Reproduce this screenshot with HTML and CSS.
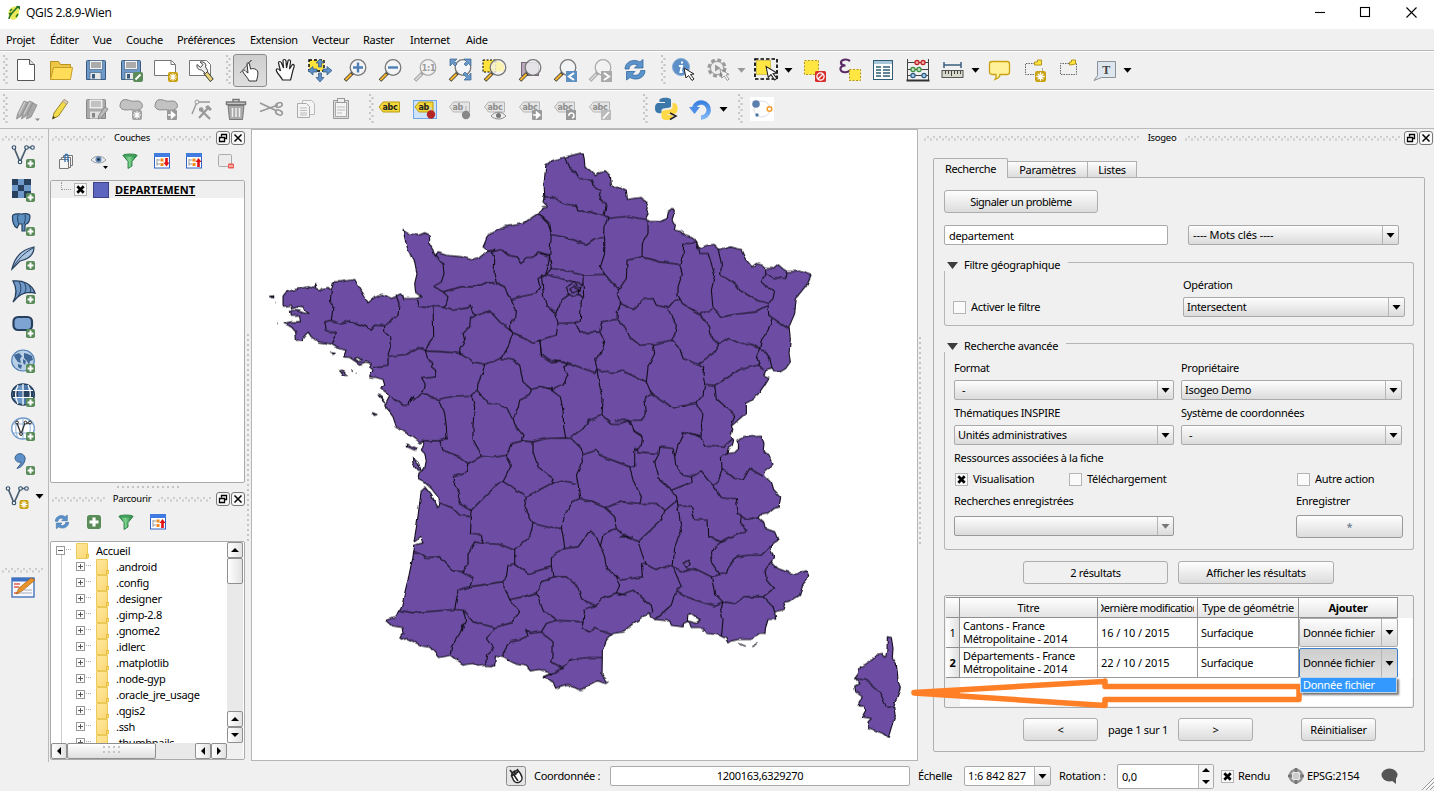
FILE: index.html
```html
<!DOCTYPE html>
<html lang="fr">
<head>
<meta charset="utf-8">
<title>QGIS 2.8.9-Wien</title>
<link rel="stylesheet" href="styles.css">
</head>
<body>
<svg class="defs" width="0" height="0">
  <defs>
    <linearGradient id="gFold" x1="0" y1="0" x2="1" y2="1"><stop offset="0" stop-color="#ffe69b"/><stop offset="1" stop-color="#fbd874"/></linearGradient>
    <linearGradient id="gBlue" x1="0" y1="0" x2="0" y2="1"><stop offset="0" stop-color="#3b83e0"/><stop offset="1" stop-color="#7fb4f5"/></linearGradient>
    <linearGradient id="gGreen" x1="0" y1="0" x2="1" y2="0"><stop offset="0" stop-color="#2f8f4c"/><stop offset=".45" stop-color="#7fd58f"/><stop offset="1" stop-color="#1d7a3a"/></linearGradient>
    <symbol id="plus" viewBox="0 0 9 9"><rect width="9" height="9" rx="1.800" fill="#5a8c5a"/><path d="M4.500 1.600v5.800M1.600 4.500h5.800" stroke="#fff" stroke-width="2"/></symbol>
    <symbol id="star" viewBox="0 0 10 10"><rect width="10" height="10" rx="2" fill="#c9a211"/><path d="M5 1.200v7.600M1.200 5h7.600M2.400 2.400l5.200 5.200M7.600 2.400l-5.200 5.200" stroke="#fff" stroke-width="1.200"/></symbol>
    <symbol id="gstar" viewBox="0 0 10 10"><rect width="10" height="10" rx="2" fill="#a3a3a3"/><path d="M5 1.200v7.600M1.200 5h7.600M2.400 2.400l5.200 5.200M7.600 2.400l-5.200 5.200" stroke="#fff" stroke-width="1.200"/></symbol>
    <symbol id="garrow" viewBox="0 0 10 10"><rect width="10" height="10" rx="1" fill="#999"/><path d="M1 5h5M4.500 2L8 5 4.500 8z" fill="#fff" stroke="#fff" stroke-width="1.400"/></symbol>
    <symbol id="lens" viewBox="0 0 24 24"><path d="M10 14.500L2 22.500" stroke="#333" stroke-width="3.600"/><path d="M8.500 16L2.500 22" stroke="#f2b630" stroke-width="2.200"/><circle cx="15" cy="9.500" r="7.800" fill="#f4f6f8" fill-opacity=".75" stroke="#777" stroke-width="1.300"/></symbol>
    <symbol id="glens" viewBox="0 0 24 24"><path d="M10 14.500L2 22.500" stroke="#999" stroke-width="3.600"/><path d="M8.500 16L2.500 22" stroke="#d8d8d8" stroke-width="2"/><circle cx="15" cy="9.500" r="7.800" fill="#f2f2f2" stroke="#aaa" stroke-width="1.300"/></symbol>
    <symbol id="cursor" viewBox="0 0 12 14"><path d="M1 1l2 10 2.500-2.500 3.500 5 2-1.500-3.500-4.500 3.500-.5z" fill="#fff" stroke="#222" stroke-width="1"/></symbol>
    <symbol id="floppy" viewBox="0 0 24 24"><path d="M2.500 3.500a1 1 0 0 1 1-1h17a1 1 0 0 1 1 1v18h-19z" fill="#6f99c9" stroke="#3a5a7d"/><rect x="5.500" y="2.500" width="13" height="9" fill="#f3f3f3" stroke="#3a5a7d" stroke-width=".6"/><path d="M7 5h10M7 7h10M7 9h10" stroke="#555" stroke-width=".9"/><rect x="6" y="14.500" width="11" height="7" fill="#e8e8e8" stroke="#3a5a7d" stroke-width=".6"/><rect x="8" y="16" width="3" height="4.500" fill="#3a5a7d"/></symbol>
    <symbol id="gfloppy" viewBox="0 0 24 24"><path d="M2.500 3.500a1 1 0 0 1 1-1h17a1 1 0 0 1 1 1v18h-19z" fill="#aaa" stroke="#888"/><rect x="5.500" y="2.500" width="13" height="9" fill="#ececec"/><path d="M7 5h10M7 7h10M7 9h10" stroke="#999"/><rect x="6" y="14.500" width="11" height="7" fill="#e0e0e0"/><rect x="8" y="16" width="3" height="4.500" fill="#888"/></symbol>
    <symbol id="gtag" viewBox="0 0 24 24"><path d="M1.500 8l4-5h16v10h-16z" fill="#e5e5e5" stroke="#b5b5b5"/></symbol>
    <symbol id="sync" viewBox="0 0 24 24"><path d="M2 11C2 4 10 0 17 4l3-2.500V10h-8.500l3-3C10 5 6.500 7 6 11z" fill="#5b93cc" stroke="#33689f" stroke-width=".8"/><path d="M22 12.500c0 7-8 11-15 7L3.500 22v-8.500H12l-3 3c4.500 2 8 0 8.700-4z" fill="#5b93cc" stroke="#33689f" stroke-width=".8"/></symbol>
    <symbol id="folder" viewBox="0 0 13 16"><path d="M.5.500h11v10.500h1v4H11v.5H.500z" fill="url(#gFold)" stroke="#ecca58"/><path d="M10.500 15.500v-4h2" fill="none" stroke="#e3b93a"/></symbol>
    <symbol id="treebox" viewBox="0 0 16 16"><rect x=".5" y=".5" width="15" height="14.500" fill="#fff" stroke="#2f63c4"/><rect x="0" y="0" width="16" height="4" fill="#3f7be0"/><path d="M3 6v7M3 7h3M3 11h3" stroke="#999" fill="none"/><rect x="6.500" y="5.500" width="3" height="3" fill="#f08a1a"/><rect x="6.500" y="10" width="3" height="3" fill="#f08a1a"/></symbol>
    <symbol id="funnel" viewBox="0 0 16 16"><path d="M1 2.500c0-2 14-2 14 0L10 8.500V13l-4 2.500v-7z" fill="url(#gGreen)" stroke="#1a7034" stroke-width=".8"/><ellipse cx="8" cy="2.400" rx="6.300" ry="1.300" fill="#3f9c5a"/></symbol>
    <symbol id="vnode" viewBox="0 0 24 24"><path d="M3 3.500l6 14.500 6.500-14.500h6" fill="none" stroke="#4a5f72" stroke-width="1.700"/><g fill="#e8eff6" stroke="#2f4a66" stroke-width="1.100"><circle cx="3" cy="3.500" r="1.800"/><circle cx="9" cy="18" r="1.800"/><circle cx="15.500" cy="3.500" r="1.800"/><circle cx="21.500" cy="3.500" r="1.800"/></g></symbol>
    <symbol id="cross" viewBox="0 0 9 9"><path d="M1.300 1.300l6.400 6.400M7.700 1.300L1.300 7.700" stroke="#000" stroke-width="2.700"/></symbol>
    <symbol id="down" viewBox="0 0 9 5"><path d="M.5 0h8L4.500 4.800z" fill="currentColor"/></symbol>
    <filter id="rough" x="0" y="0" width="100%" height="100%"><feTurbulence type="fractalNoise" baseFrequency=".14" numOctaves="1" seed="4" result="n"/><feDisplacementMap in="SourceGraphic" in2="n" scale="4" xChannelSelector="R" yChannelSelector="G"/></filter>
  </defs>
</svg>

<div class="window">
  <header class="titlebar">
    <svg class="logo" width="14" height="16" viewBox="0 0 14 16"><path d="M4 3c4-3 9-1 8 5s-5 8-8 6S0 6 4 3z" fill="#e8ea5a"/><path d="M2 14C2 9 8 6 11 1M3 6l2-2M2 9l2-1M9 12l2-3" stroke="#267326" stroke-width="1.500" fill="none"/><path d="M9 1h4v4z" fill="#267326"/></svg>
    <span class="title">QGIS 2.8.9-Wien</span>
    <svg class="winbtns" width="110" height="14" viewBox="0 0 110 14" fill="none" stroke="#000" stroke-width="1.100"><path d="M3 6.500h10"/><rect x="48.500" y="1.500" width="9" height="9"/><path d="M94.500 1.500l10 10M104.500 1.500l-10 10"/></svg>
  </header>

  <nav class="menubar"><span class="m1">Projet</span><span class="m2">Éditer</span><span class="m3">Vue</span><span class="m4">Couche</span><span class="m5">Préférences</span><span class="m6">Extension</span><span class="m7">Vecteur</span><span class="m8">Raster</span><span class="m9">Internet</span><span class="m10">Aide</span></nav>

  <div class="toolbar">
    <i class="grip-v"></i>
    <svg class="ic"><path d="M3.500 1.500h12l5 5v16h-17z" fill="#fff" stroke="#555"/><path d="M15.500 1.500v5h5" fill="#ddd" stroke="#555"/></svg>
    <svg class="ic"><path d="M1.500 21.500v-18h8l2 3h10v4" fill="#edc646" stroke="#b98f1e"/><path d="M1.500 21.500l3-12h19l-2 12z" fill="#ffdd59" stroke="#c69d29"/></svg>
    <svg class="ic"><use href="#floppy"/></svg>
    <svg class="ic"><use href="#floppy"/><rect x="14" y="14" width="10" height="10" rx="2" fill="#5a8c5a"/><path d="M16.500 21.500l5-5" stroke="#fff" stroke-width="2"/></svg>
    <svg class="ic"><path d="M.500 2.500h17l4 4v11H.500z" fill="#fff" stroke="#777"/><path d="M17 2.500v4h4" fill="none" stroke="#777"/><use href="#star" x="14" y="14" width="10" height="10"/></svg>
    <svg class="ic"><path d="M.500 2.500h17l4 4v11H.500z" fill="#fff" stroke="#777"/><path d="M16 14l7 8.500" stroke="#333" stroke-width="4.500"/><path d="M16.500 14.500l6 7.500" stroke="#e9d27c" stroke-width="3"/><path d="M8 6.500l3.500 3 2.500-3-3-2.500c4-1 7 2 5.500 5l2.500 4-2.500 2.500-4-3.500c-3 0-5-2-4.500-5.500z" fill="#eee" stroke="#444"/></svg>
    <i class="grip-v g1"></i>
    <span class="pressed"><svg class="ic"><path d="M9 23c-1-3-5-7-6-9s1-3 3-.5l2 1.500-1-9c0-2 2-2 2.500 0l1 5c3-1 6 0 7 2s0 6-1 10z" fill="#fff" stroke="#333" transform="translate(2 0)"/><path d="M2 15l8-9 3-4M9 7l5-5" stroke="#666" fill="none"/></svg></span>
    <svg class="ic hand"><path d="M8 22c-1-3-5-6-6-9s2-3 4 0L4 5c0-2 2-2 3 0l2 5-.5-7c0-2 2.500-2 3 0l.5 7 1.500-7c.5-2 3-1 2.500 1L15 11l2.500-4c1-1.500 3 0 2 2-2 5-2 9-3.500 13z" fill="#fff" stroke="#222" stroke-width="1.200" transform="translate(1.500 0)"/></svg>
    <svg class="ic"><rect x="1" y="2" width="15" height="11" fill="#ffe23c" stroke="#000" stroke-width="1.400" stroke-dasharray="3 2"/><path d="M12 1l4 4h-2.500v4h-3V5H8zM12 24l4-4.500h-2.500V15h-3v4.500H8zM0 12.500l5-4V11h4v3H5v3zM24 12.500l-5-4V11h-4v3h4v3z" fill="#5d8fc8" stroke="#2f5680" stroke-width=".7"/></svg>
    <svg class="ic"><use href="#lens"/><path d="M15 4.500v10M10 9.500h10" stroke="#4d7fb5" stroke-width="2.400"/></svg>
    <svg class="ic"><use href="#lens"/><path d="M10 9.500h10" stroke="#4d7fb5" stroke-width="2.400"/></svg>
    <svg class="ic"><use href="#glens"/><text x="8.800" y="12.500" class="ratio">1:1</text></svg>
    <svg class="ic"><use href="#lens"/><path d="M2 1h7L6.500 3.500 9 6 7 8 4.500 5.500 2 8zM23 1h-7l2.500 2.500L16 6l2 2 2.500-2.500L23 8zM23 22h-7l2.500-2.500L15 16l2-2 3.500 3.500L23 15z" fill="#6a97c9" stroke="#3a648f" stroke-width=".7"/></svg>
    <svg class="ic"><rect x="0" y="2" width="13" height="12" fill="#ffe23c" stroke="#000" stroke-dasharray="2 1.500"/><use href="#lens"/><path d="M13 3.500a6.500 6.500 0 0 1 7 10h-7z" fill="#fff2a0" opacity=".8"/></svg>
    <svg class="ic"><rect x="3.500" y="4.500" width="17" height="13" fill="#b7a9b9" stroke="#75647a"/><use href="#lens"/></svg>
    <svg class="ic"><use href="#lens"/><rect x="13" y="13" width="11" height="11" fill="#5e8fc1"/><path d="M21 15l-5 3.500 5 3.500" stroke="#fff" stroke-width="2" fill="none"/></svg>
    <svg class="ic"><use href="#glens"/><rect x="13" y="13" width="11" height="11" fill="#aaa"/><path d="M16 15l5 3.500-5 3.500" stroke="#fff" stroke-width="2" fill="none"/></svg>
    <svg class="ic"><use href="#sync"/></svg>
    <i class="grip-v g2"></i>
    <svg class="ic"><circle cx="10" cy="9" r="8.500" fill="#5d8fc8" stroke="#83a9d1"/><path d="M8 8h3l-1.500 6h2M11 3.500v2" stroke="#fff" stroke-width="2" fill="none"/><use href="#cursor" x="12" y="9" width="12" height="14"/></svg>
    <svg class="ic"><circle cx="11" cy="10" r="8" fill="#ddd" stroke="#999" stroke-width="3" stroke-dasharray="3.800 2.500"/><circle cx="11" cy="10" r="6.500" fill="#eee" stroke="#999"/><path d="M9 6.500l5.500 3.500L9 13.500z" fill="#999"/><use href="#cursor" x="13" y="10" width="11" height="13" opacity=".45"/></svg>
    <svg class="dn grey a1"><use href="#down"/></svg>
    <svg class="ic"><rect x="1" y="1" width="22" height="20" fill="none" stroke="#000" stroke-width="1.700" stroke-dasharray="3.500 2"/><rect x="2.500" y="2.500" width="14" height="14" fill="#ffe640" stroke="#b9a21b" stroke-width=".6"/><use href="#cursor" x="11" y="7" width="13" height="16"/></svg>
    <svg class="dn a2"><use href="#down"/></svg>
    <svg class="ic"><rect x="1.500" y="2.500" width="14" height="14" fill="#ffe640" stroke="#b5951a" stroke-dasharray="2 1.500"/><rect x="12" y="13" width="11" height="11" rx="1.500" fill="#d82d2d"/><circle cx="17.500" cy="18.500" r="3.600" fill="none" stroke="#fff" stroke-width="1.300"/><path d="M15 21l5-5" stroke="#fff" stroke-width="1.300"/></svg>
    <svg class="ic eps"><path d="M12 3C8 0 2.500 2 3 5c.3 2 3 2.500 4.500 2.500C4 7.500 2 9 2.500 11.500c1 3.500 7 3.500 9.500 1" fill="none" stroke="#5b2a66" stroke-width="2.200"/><rect x="11.500" y="11.500" width="11" height="11" fill="#ffe640" stroke="#b5951a" stroke-dasharray="2 1.500"/></svg>
    <svg class="ic"><rect x="2.500" y="2.500" width="19" height="19" fill="#fff" stroke="#2f5c75"/><rect x="3" y="3" width="18" height="3" fill="#a9c5d8"/><path d="M5 9h5M5 12h5M5 15h5M5 18h5M12 9h7M12 12h7M12 15h7M12 18h7" stroke="#2f5c75" stroke-width="1.300"/></svg>
    <svg class="ic"><path d="M1.500 1v21M22.500 1v21M1 4.500h22M1 11.500h22M1 17.500h22" stroke="#444" fill="none"/><path d="M.500 22.500h23" stroke="#333" stroke-width="2"/><g stroke-width="1.200"><g fill="#f2a0a0" stroke="#b22"><circle cx="11" cy="4.500" r="2.100"/><circle cx="17" cy="4.500" r="2.100"/></g><g fill="#bfe4bf" stroke="#3c8a3c"><circle cx="7" cy="11.500" r="2.100"/><circle cx="13" cy="11.500" r="2.100"/></g><g fill="#a9cbe6" stroke="#2c5d86"><circle cx="7" cy="17.500" r="2.100"/><circle cx="18" cy="17.500" r="2.100"/></g></g></svg>
    <svg class="ic"><path d="M3 4v6M20 4v6M3 7h17" stroke="#3a5f80" stroke-width="1.500"/><rect x="1" y="12.500" width="21" height="7" fill="#d6d9cb" stroke="#555"/><path d="M4.500 13v3M7.500 13v3M10.500 13v5M13.500 13v3M16.500 13v3M19.500 13v3" stroke="#444"/></svg>
    <svg class="dn a3"><use href="#down"/></svg>
    <svg class="ic"><path d="M4 3.500h15q2.500 0 2.500 2.500v8q0 2.500-2.500 2.500h-7c0 2-2 4-5 5 1-1.500 1.500-3 1-5H4q-2.500 0-2.500-2.500V6Q1.500 3.500 4 3.500z" fill="#fff09a" stroke="#c9a211" stroke-width="1.300"/></svg>
    <svg class="ic"><path d="M12 5.500H2.500v11h17v-6" fill="none" stroke="#666" stroke-dasharray="1.500 1"/><path d="M11.500 7v-3h3V2h4v5z" fill="#ffe640" stroke="#b5951a"/><use href="#star" x="12" y="13" width="11" height="11"/></svg>
    <svg class="ic"><path d="M11 5.500H2.500v11h16v-11" fill="none" stroke="#666" stroke-dasharray="1.500 1"/><path d="M11.500 7v-3h2V2h4v4z" fill="#ffe640" stroke="#b5951a"/></svg>
    <svg class="ic"><path d="M4.500 3.500h18v16h-14l-7.500 3 3.500-5z" fill="#dde6ee" stroke="#8b9197"/><text x="9.300" y="15.500" class="tee">T</text></svg>
    <svg class="dn a4"><use href="#down"/></svg>
  </div>

  <div class="toolbar">
    <i class="grip-v"></i>
    <svg class="ic"><path d="M2.500 22l1-5L10 4l4 1.500L7 19zM7.500 22l1-5L15 4l4 1.500L12 19zM12.500 22l1-5L19 6l4 2-6 12z" fill="#a9a9a9" stroke="#8a8a8a" stroke-width=".8"/><path d="M5 17l6-12M10 17l6-12" stroke="#cfcfcf" stroke-width="1.200"/><path d="M21 21.500h5l-2.500 2.500z" fill="#888"/></svg>
    <svg class="ic"><path d="M3.500 22l1.500-6L15 2.500l4 2.500-9.500 14z" fill="#f2dc4a" stroke="#8d7a1d" stroke-width=".9"/><path d="M3.500 22l.7-3 2 1.500z" fill="#333"/><path d="M15 2.500l-1.500 2 4 2.500L19 5z" fill="#e9cfae" stroke="#999" stroke-width=".7"/></svg>
    <svg class="ic"><use href="#gfloppy"/><path d="M14 22l1-4 6-8 3 2-6 8z" fill="#bbb" stroke="#888"/></svg>
    <svg class="ic"><path d="M2 5c2-4 7-2 10-1s9-2 11 3-4 7-9 6-8 1-11-1-2-4-1-7z" fill="#c2c2c2" stroke="#888"/><use href="#gstar" x="13" y="13" width="10" height="10"/></svg>
    <svg class="ic"><path d="M2 5c2-4 7-2 10-1s9-2 11 3-4 7-9 6-8 1-11-1-2-4-1-7z" fill="#c2c2c2" stroke="#888"/><use href="#garrow" x="13" y="13" width="10" height="10"/></svg>
    <svg class="ic"><path d="M3 17l5-12h13" fill="none" stroke="#999" stroke-width="1.400"/><circle cx="8" cy="5" r="2" fill="#eee" stroke="#999"/><path d="M10 21l9-10M12 13l9 9" stroke="#999" stroke-width="2.200" fill="none"/><path d="M16 10l3-2 4 4-2 2zM10 11l3-1 2 3-2 2-3-1z" fill="#999"/></svg>
    <svg class="ic"><path d="M4 8.500h16l-1.500 14h-13z" fill="#aaa" stroke="#777"/><path d="M2.500 7.500V5h19v2.500zM9 5V2.500h6V5" fill="#ddd" stroke="#777" stroke-width="1.500"/><path d="M8.500 11v9M12 11v9M15.500 11v9" stroke="#eee" stroke-width="1.500"/></svg>
    <svg class="ic"><path d="M1 6l17 8M1 14.500l18-6.500" stroke="#999" stroke-width="1.800"/><ellipse cx="20" cy="15.500" rx="3.500" ry="2.300" fill="none" stroke="#999" stroke-width="1.600" transform="rotate(25 20 15.500)"/><ellipse cx="20" cy="8" rx="3.300" ry="2.200" fill="none" stroke="#999" stroke-width="1.600" transform="rotate(-20 20 8)"/></svg>
    <svg class="ic"><path d="M8.500 3.500h9l3 3v11h-12z" fill="#f4f4f4" stroke="#bbb"/><path d="M3.500 6.500h9l3 3v11h-12z" fill="#f4f4f4" stroke="#aaa"/><path d="M6 11h7M6 13.500h7M6 16h7M6 18h7" stroke="#bbb"/></svg>
    <svg class="ic"><path d="M4.500 3.500h15v18h-15z" fill="#ddd" stroke="#999"/><rect x="6.500" y="5.500" width="11" height="14" fill="#f4f4f4" stroke="#aaa"/><rect x="8.500" y="1.500" width="7" height="4" fill="#eee" stroke="#999"/><path d="M8 10h8M8 13h8M8 16h5" stroke="#bbb"/></svg>
    <i class="grip-v g3"></i>
    <svg class="ic"><path d="M1 8l4-5h16.500v10H5z" fill="#f3d839" stroke="#b99c12"/><text x="4.500" y="11" class="abc">abc</text></svg>
    <svg class="ic"><rect x=".5" y="1.500" width="23" height="18" fill="#cfe3fa" stroke="#6ea8e8"/><path d="M2 8l4-5h14v10H6z" fill="#f3d839" stroke="#b99c12"/><text x="5.500" y="11" class="abc">ab</text><path d="M17.500 8v8" stroke="#ccc" stroke-width="2"/><circle cx="18" cy="15.500" r="4.200" fill="#b22626"/></svg>
    <svg class="ic"><use href="#gtag"/><text x="4.500" y="11" class="abc g">ab</text><path d="M18 7v8" stroke="#ccc" stroke-width="2"/><circle cx="18" cy="16" r="4.200" fill="#888"/></svg>
    <svg class="ic"><use href="#gtag"/><text x="4.500" y="11" class="abc g">abc</text><path d="M8 17c4-5 11-5 15 0-4 4-11 4-15 0z" fill="#eee" stroke="#888"/><circle cx="15.500" cy="16.500" r="2.500" fill="#777"/></svg>
    <svg class="ic"><use href="#gtag"/><text x="4.500" y="11" class="abc g">abc</text><use href="#garrow" x="14" y="11" width="10" height="10"/></svg>
    <svg class="ic"><use href="#gtag"/><text x="4.500" y="11" class="abc g">abc</text><rect x="13" y="11" width="10" height="10" fill="#999"/><path d="M16 17a2.500 2.500 0 1 1 3 2" stroke="#fff" stroke-width="1.500" fill="none"/></svg>
    <svg class="ic"><use href="#gtag"/><text x="4.500" y="11" class="abc g">abc</text><rect x="13" y="11" width="10" height="10" fill="#bbb"/><path d="M15 19.500l6-6.500" stroke="#fff" stroke-width="1.800"/></svg>
    <i class="grip-v g4"></i>
    <svg class="ic"><path d="M5.500 2.500C7 0 16 0 17 2.500V9c0 3-8 1-9.500 4v3C2 17 1 14 1 11s1-5 4-5h6V5H5.500z" fill="#3b77a8"/><path d="M18.500 6c5-.5 5.500 4 5 7s-2 4-4 4h-6v1h5c.5 4-2 5-6 5s-5-2-5-4v-4c1-3 9-1 11-4z" fill="#ffd845"/><path d="M16 16l6 3-6 3.500" stroke="#222" stroke-width="1.500" fill="none"/></svg>
    <svg class="ic"><path d="M5 11a7.500 7.500 0 1 1 7 9.500" fill="none" stroke="url(#gBlue)" stroke-width="4.500"/><path d="M0 10h11l-5.500 7z" fill="#4c8fe8"/></svg>
    <svg class="dn a5"><use href="#down"/></svg>
    <i class="grip-v g5"></i>
    <svg class="ic"><rect width="24" height="24" fill="#fff"/><circle cx="12" cy="12" r="8" fill="none" stroke="#d8dfe8"/><circle cx="6" cy="7" r="3.800" fill="#5d7fae"/><circle cx="7" cy="18" r="1.700" fill="#4f74a8"/><circle cx="19.500" cy="12" r="2.300" fill="#fff" stroke="#f09a2a" stroke-width="1.500"/></svg>
  </div>

  <div class="main">
    <aside class="sidebar">
      <i class="grip-h"></i>
      <svg class="ic"><use href="#vnode"/><use href="#plus" x="15" y="15" width="9" height="9"/></svg>
      <svg class="ic"><path d="M1 1h19v19H1z" fill="#6f99c9"/><path d="M1 1h6v6H1zM13 1h7v6h-7zM7 7h6v6H7zM1 13h6v7H1zM13 13h7v7h-7z" fill="#27405e"/><use href="#plus" x="15" y="15" width="9" height="9"/></svg>
      <svg class="ic"><path d="M1.500 4C2 1 8 2 10 2s8-2 9 2c0 5-2 8-4 8l-1 1v6h-3v-7H8l-2 4C3 15 1 9 1.500 4z" fill="#5d8fc0" stroke="#27405e" stroke-width="1.200"/><path d="M7 3c-1 4 0 7 1 9M14 3c1 3 0 6-1 9" stroke="#27405e" fill="none"/><use href="#plus" x="15" y="15" width="9" height="9"/></svg>
      <svg class="ic"><path d="M1 23C3 14 8 4 23 1c0 7-5 12-14 14z" fill="#a9c4e0" stroke="#27405e" stroke-width="1.200"/><path d="M1 23C7 13 13 7 22 2" stroke="#27405e" fill="none"/><use href="#plus" x="15" y="15" width="9" height="9"/></svg>
      <svg class="ic"><path d="M2 1c10-1 19 3 22 12-8-2-16 1-22 9C6 15 6 8 2 1z" fill="#6f99c9" stroke="#27405e" stroke-width="1.300"/><path d="M8 1.500c3 5 2 11-1 15M13 3c3 4 2 8 0 11M18 5.500c2 3 2 5 1 8" stroke="#27405e" fill="none"/><use href="#plus" x="15" y="15" width="9" height="9"/></svg>
      <svg class="ic"><rect x="2.500" y="3" width="18.500" height="13" rx="4.500" fill="#7da4d2" stroke="#27405e" stroke-width="2.200"/><use href="#plus" x="15" y="15" width="9" height="9"/></svg>
      <svg class="ic"><ellipse cx="12" cy="11.500" rx="11.300" ry="10.500" fill="#b9cfe6" stroke="#4f7fb1" stroke-width="1.200"/><path d="M3 6l5-2 3 3-2 3 1 4-3-1-3-4zM13 4l4 1 4 2 1 4-3 1-1 4-2-4-3-3zM7 15l4 1-1 4-3-2zM12 10l3 2-1 4-2-2z" fill="#3f6898"/><use href="#plus" x="15" y="15" width="9" height="9"/></svg>
      <svg class="ic"><ellipse cx="12" cy="11.500" rx="11.300" ry="10.500" fill="#6f99c9" stroke="#27405e" stroke-width="1.600"/><path d="M2 8h20v6H2z" fill="#27405e"/><path d="M7 8h4v6H7zM13 2h4v5h-4zM13 15h4v5h-4z" fill="#4a76aa"/><path d="M12 1v21M2 7.500h20M2 14.500h20M7 2c-3 6-3 13 0 19M17 2c3 6 3 13 0 19" stroke="#fff" fill="none" stroke-width="1.200"/><use href="#plus" x="15" y="15" width="9" height="9"/></svg>
      <svg class="ic"><ellipse cx="12" cy="11.500" rx="11.300" ry="10.500" fill="#fff" stroke="#6f99c9" stroke-width="1.300"/><path d="M12 1v21M2 7h20M2 16h20M7 2c-3 6-3 13 0 19M17 2c3 6 3 13 0 19" stroke="#8fb1d8" fill="none"/><path d="M6 6l4 11 4-11h5" fill="none" stroke="#333" stroke-width="1.300"/><g fill="#fff" stroke="#222"><circle cx="6" cy="5.500" r="1.400"/><circle cx="10" cy="17" r="1.400"/><circle cx="14.500" cy="5.500" r="1.400"/><circle cx="19" cy="5.500" r="1.400"/></g><use href="#plus" x="15" y="15" width="9" height="9"/></svg>
      <svg class="ic"><path d="M4 7a5 5 0 1 1 10 2.500C13 14 10 17 6 18c3-4 4.500-5 4-6.500C6.500 12.500 4 10 4 7z" fill="#5d8fc8" stroke="#3a5f8a" transform="translate(0 -.5)"/><use href="#plus" x="15" y="15" width="9" height="9"/></svg>
      <div class="pair"><svg class="ic"><use href="#vnode"/><use href="#star" x="14" y="15" width="10" height="9"/></svg><svg class="dn"><use href="#down"/></svg></div>
      <i class="grip-h low"></i>
      <svg class="ic"><rect x="1" y="2" width="22" height="19" fill="#f6f8fb" stroke="#3a6bb5" stroke-width="1.300"/><rect x="1" y="2" width="22" height="3.500" fill="#3f72c4"/><path d="M3 8h6M3 11h5M3 17h5" stroke="#e25b4c" stroke-width="1.400"/><path d="M13 14h8M8 17h13" stroke="#aab"/><path d="M5 18l3-6L20 2l4 2-13 11z" fill="#e8922b" stroke="#a86414" stroke-width=".7"/></svg>
    </aside>

    <section class="docks">
      <div class="dock-title"><i class="grip-h"></i><span>Couches</span><i class="grip-h"></i><b class="sq"><svg viewBox="0 0 10 10"><path d="M3.500 3.500v-2h5v4h-2M1.500 4.500h5v4h-5z" fill="none" stroke="#000" stroke-width="1.300"/></svg></b><b class="sq"><svg viewBox="0 0 10 10"><path d="M1.500 1.500l7 7M8.500 1.500l-7 7" stroke="#000" stroke-width="1.500"/></svg></b></div>
      <div class="dock-tools">
        <svg class="i16"><path d="M5.500 5V2.500h9v10H12M3.500 7V4.500h9v10H10M1.500 6.500h9v9h-9z" fill="#f4f4f4" stroke="#777"/><path d="M7 9V3c0-2.500 3-2.500 3 0v6" stroke="#2f6fb0" stroke-width="1.300" fill="none"/></svg>
        <svg class="i16 eye"><path d="M0 7c4-5 11-5 15 0-4 4-11 4-15 0z" fill="#e8edf1" stroke="#999"/><circle cx="7.500" cy="6.500" r="3" fill="#5b86b5"/><circle cx="7.500" cy="6.500" r="1.200" fill="#222"/><path d="M12 13h5l-2.500 3z"/></svg>
        <svg class="i16"><use href="#funnel"/></svg>
        <svg class="i16"><use href="#treebox"/><path d="M12.500 5v6" stroke="#e01010" stroke-width="2.600"/><path d="M9.500 9.500h6l-3 4z" fill="#e01010"/></svg>
        <svg class="i16"><use href="#treebox"/><path d="M12.500 8v6" stroke="#e01010" stroke-width="2.600"/><path d="M9.500 9h6l-3-4z" fill="#e01010"/></svg>
        <svg class="i16"><rect x=".5" y="1.500" width="13" height="12" rx="1" fill="#ececec" stroke="#aaa"/><rect x="10" y="10.500" width="6" height="5" rx="1" fill="#ee5a52"/><path d="M11 13h4" stroke="#fff"/></svg>
      </div>
      <div class="frame layers"><div class="layer"><i class="elbow"></i><b class="cb on"><svg><use href="#cross"/></svg></b><i class="swatch"></i><strong>DEPARTEMENT</strong></div></div>
      <div class="split"><i class="grip-dots"></i></div>
      <div class="dock-title t2"><i class="grip-h"></i><span>Parcourir</span><i class="grip-h"></i><b class="sq"><svg viewBox="0 0 10 10"><path d="M3.500 3.500v-2h5v4h-2M1.500 4.500h5v4h-5z" fill="none" stroke="#000" stroke-width="1.300"/></svg></b><b class="sq"><svg viewBox="0 0 10 10"><path d="M1.500 1.500l7 7M8.500 1.500l-7 7" stroke="#000" stroke-width="1.500"/></svg></b></div>
      <div class="dock-tools b">
        <svg class="i16" viewBox="0 0 16 16"><use href="#sync" width="16" height="16"/></svg>
        <svg class="i16"><use href="#plus" x="1" y="1" width="14" height="14"/></svg>
        <svg class="i16"><use href="#funnel"/></svg>
        <svg class="i16"><use href="#treebox"/><path d="M12.500 8v6" stroke="#e01010" stroke-width="2.600"/><path d="M9.500 9h6l-3-4z" fill="#e01010"/></svg>
      </div>
      <div class="frame browser">
        <ul class="tree">
          <li class="root"><i class="pm minus"></i><svg class="fo"><use href="#folder"/></svg>Accueil</li>
          <li><i class="pm"></i><svg class="fo"><use href="#folder"/></svg>.android</li>
          <li><i class="pm"></i><svg class="fo"><use href="#folder"/></svg>.config</li>
          <li><i class="pm"></i><svg class="fo"><use href="#folder"/></svg>.designer</li>
          <li><i class="pm"></i><svg class="fo"><use href="#folder"/></svg>.gimp-2.8</li>
          <li><i class="pm"></i><svg class="fo"><use href="#folder"/></svg>.gnome2</li>
          <li><i class="pm"></i><svg class="fo"><use href="#folder"/></svg>.idlerc</li>
          <li><i class="pm"></i><svg class="fo"><use href="#folder"/></svg>.matplotlib</li>
          <li><i class="pm"></i><svg class="fo"><use href="#folder"/></svg>.node-gyp</li>
          <li><i class="pm"></i><svg class="fo"><use href="#folder"/></svg>.oracle_jre_usage</li>
          <li><i class="pm"></i><svg class="fo"><use href="#folder"/></svg>.qgis2</li>
          <li><i class="pm"></i><svg class="fo"><use href="#folder"/></svg>.ssh</li>
          <li><i class="pm"></i><svg class="fo"><use href="#folder"/></svg>.thumbnails</li>
        </ul>
        <div class="vscroll"><b class="sb"><i class="up"></i></b><b class="thumb"></b><span></span><b class="sb"><i class="up"></i></b><b class="sb"><i class="dw"></i></b></div>
        <div class="hscroll"><b class="sb"><i class="lf"></i></b><b class="thumb"><i class="grip-dots"></i></b><span></span><b class="sb"><i class="lf"></i></b><b class="sb"><i class="rt"></i></b></div>
        <div class="corner"></div>
      </div>
    </section>

    <div class="vsplit"><i class="grip-dots"></i></div>

    <div class="map">
      <svg class="france" viewBox="253 130.500 665 630">
        <g filter="url(#rough)" stroke="#15101f" stroke-width="3.400" fill="none" stroke-linejoin="round">
          <path fill="#6c4ea3" transform="translate(260.7 140.700) scale(.33333)" d="M970 37L973 55 976 78 990 90 1008 107 1020 95 1037 92 1052 107 1055 135 1062 143 1080 140 1100 150 1103 178 1125 174 1143 172 1165 187 1157 207 1166 222 1158 238 1170 243 1198 245 1222 236 1226 215 1240 205 1244 212 1237 238 1247 255 1244 270 1265 274 1280 288 1297 293 1310 303 1320 325 1340 316 1360 313 1375 326 1390 328 1412 320 1445 328 1455 350 1465 366 1477 380 1490 370 1508 375 1518 384 1542 386 1556 374 1570 386 1582 394 1620 393 1654 405 1640 435 1610 472 1605 520 1588 560 1592 595 1588 640 1592 665 1578 685 1562 695 1545 695 1537 683 1520 688 1512 705 1528 712 1512 738 1495 762 1475 780 1457 790 1457 820 1435 840 1415 858 1420 870 1412 885 1422 900 1418 915 1405 925 1402 940 1425 937 1437 925 1435 900 1445 895 1465 890 1505 888 1513 910 1510 935 1527 943 1540 972 1515 995 1515 1005 1535 1025 1542 1048 1563 1070 1558 1100 1540 1105 1525 1118 1500 1122 1495 1130 1512 1145 1517 1165 1545 1175 1555 1200 1540 1210 1532 1232 1542 1250 1535 1265 1555 1285 1580 1295 1605 1302 1640 1292 1647 1310 1628 1335 1620 1365 1590 1385 1575 1390 1570 1408 1545 1415 1548 1437 1525 1438 1517 1465 1516 1480 1505 1478 1490 1488 1472 1498 1440 1498 1415 1502 1405 1508 1398 1495 1385 1488 1370 1483 1342 1480 1330 1462 1295 1462 1288 1445 1272 1452 1270 1460 1235 1455 1230 1442 1185 1438 1172 1430 1170 1418 1155 1425 1120 1450 1090 1475 1060 1480 1040 1500 1028 1530 1027 1605 1045 1625 1038 1630 1012 1622 990 1633 970 1647 955 1647 925 1632 905 1637 888 1644 880 1625 850 1612 875 1600 840 1588 812 1592 800 1578 770 1572 730 1552 707 1548 705 1577 678 1575 655 1578 640 1570 610 1575 572 1545 540 1552 515 1522 490 1518 442 1495 425 1500 420 1495 433 1480 430 1462 400 1458 380 1440 405 1432 425 1400 448 1305 462 1238 465 1215 490 1208 482 1190 465 1205 463 1202 472 1150 485 1050 495 1040 515 1065 535 1102 540 1095 538 1075 515 1045 490 1022 475 1015 478 998 495 985 500 960 495 940 485 930 495 902 480 908 450 885 410 860 400 830 375 795 390 765 365 745 375 735 370 718 350 712 330 710 340 690 330 680 335 670 318 665 300 672 270 652 255 650 262 630 235 625 215 612 195 608 175 605 155 590 145 575 130 592 128 600 110 600 108 575 95 560 70 550 95 545 122 545 120 525 95 525 92 510 112 512 148 523 130 503 115 500 100 505 95 495 70 498 70 468 80 455 120 445 145 440 165 445 168 430 172 448 182 452 190 445 205 442 215 450 222 425 245 425 270 420 285 418 295 435 310 460 325 488 345 472 370 462 395 475 410 468 428 460 432 475 470 475 488 470 468 455 465 430 472 400 465 365 445 330 438 305 430 268 450 280 475 286 495 278 512 285 513 300 507 308 520 330 525 345 535 338 560 345 605 350 640 360 660 352 680 335 705 330 685 332 670 320 685 285 735 260 790 250 835 220 848 200 863 198 850 185 855 165 853 130 858 75 875 62 900 55 920 50Z"/>
          <path transform="translate(260.7 140.700) scale(.33333)" d="M215 450L212 480 220 500 215 540 195 545 200 570 230 580 218 612M215 540L240 550 270 542 320 560 330 572 345 555 375 557 380 550 400 535 415 525 418 490 410 468M375 557L375 575 390 590 392 620 385 645 385 675 340 680M388 648L440 643 475 622 497 632M470 475L475 500 495 505 515 495 550 502 560 490 565 470 550 455 520 440 545 425 553 400 550 372 525 345M520 500L522 590 510 605 497 632M550 502L580 510 625 503 632 495 640 520 650 525 632 535 630 560 610 580 615 600 600 625 605 640 550 635 497 632M550 455L600 440 640 440 680 428 705 428M697 335L705 360 703 400 710 428 735 440 745 465 755 478M697 335L725 328 745 345 770 350 783 370 800 352 820 352 835 335 870 345M835 220L865 250 875 280 870 345 865 380 858 403M755 478L790 468 830 460 840 440 835 415 858 403M755 478L770 510 768 535 750 545 750 565 760 578M650 525L690 512 720 545 760 578 745 620 725 655 675 672 640 665 600 640M497 632L505 660 520 670 515 680 528 690 528 710 485 715 497 735 488 758 465 780 460 768 455 785 452 768 448 795 430 795 395 770M488 758L510 770 535 778 580 768 635 765 652 750 655 730 668 700 675 672M535 778L555 820 560 860 562 897M635 765L645 800 640 850 640 897M652 750L685 790 720 790 740 805 760 835 775 805 780 780 810 765 815 748M725 655L760 660 780 675 790 725 815 748 850 740 880 745M760 835L765 855 790 885 785 897M760 578L790 590 820 610 845 600 840 600 845 640 845 650 875 668 900 665 925 668"/>
          <path transform="translate(540.7 140.700) scale(.33333)" d="M78 50L90 85 108 95 120 118 155 120 160 135 185 152 180 180 200 190 193 228M10 170L40 170 75 192 110 195 115 212 150 215 193 228 205 235 265 228 318 238M-5 220L30 250 35 283 80 293 140 312 165 295 195 292M205 235L193 255 192 280 195 292 195 340 182 380 195 402M30 350L35 385 75 390 130 405 195 402 215 425 238 447M35 385L20 403M0 340L30 347M5 405L20 403 60 415 100 425 130 430 130 405M130 430L132 470 125 480 122 540 108 547M80 440L105 427 120 445 115 462 100 468 85 460ZM90 447L105 438 118 452 98 455ZM118 445L130 428M115 462L130 475M5 405L12 470 20 495 48 520 65 480 90 462M48 520L55 550 108 547 120 578 180 575M55 550L50 585 0 600 5 640 30 660 85 668 72 680 85 705 70 735 35 750 38 742 0 740M85 668L130 685 165 697 172 687M180 575L195 605 185 640 165 655 172 687M180 575L185 545 232 537 233 515 243 490 232 460 238 447 260 415 262 360 307 350 308 310 325 280 325 243M307 350L360 365 420 373 430 345 432 312 450 313 470 303 478 340 505 340 515 370 525 405 515 450 520 505 480 522M420 373L428 400 415 440 415 465 428 490 480 522M243 490L280 508 310 478 340 475 350 495 385 503 405 480 425 478M535 326L545 370 543 405 585 430 600 450 642 475 685 490 700 475 705 450 680 440 665 425 678 398 700 412 738 415 742 394M678 384V398M520 505L545 530 590 522 650 515 685 495 687 525 748 567M697 535L685 570 665 600 660 628 680 635 690 655 697 683M232 537L255 560 270 590 300 615 340 612 395 600 405 585 410 555 395 530 385 503M480 522L510 560 515 595 540 610 520 640 485 665 475 672 430 655 420 625 395 600M540 610L570 595 600 610 630 610 660 628 650 650 658 675 672 690M658 675L600 688 560 715 525 735 495 732 490 705 492 680 475 672M340 612L345 640 325 680 320 725 335 760M172 687L220 700 245 690 290 712 320 728M172 687L180 740 190 780 187 825 215 850 245 850 270 840 305 840 320 820 315 770 335 760 400 803 468 790 490 765 495 732M525 735L530 775 585 825 575 858M468 790L490 820 485 860 488 885 480 890M425 878L455 880 480 890M187 825L150 840 130 865 95 890M265 840L280 870 305 885 308 897M35 750L62 770 70 810 72 860 78 892"/>
          <path transform="translate(360.7 420.700) scale(.33333)" d="M195 62L240 62 265 55M240 62L250 90 300 110 325 130M340 57L360 95 365 108 325 130 318 160 280 170 285 195 300 220 298 250 335 270M365 108L400 112 440 105 455 135 430 185M240 247L280 265 300 285 335 290M335 270L332 290M335 270L365 240 415 190 430 185 465 205 500 230 575 190M440 105L455 70 490 62 485 57M490 62L520 65 560 55 620 53 635 55 665 85 668 125 650 165 655 190M520 65L520 95 535 140 580 175 575 190 605 180 650 190M500 230L495 260 520 310 580 325 605 320M655 190L660 235 640 245 620 275 605 320M660 235L695 245 735 262 765 290 770 325M735 262L790 245 840 250M770 325L745 335 730 345 722 378M605 320L612 360 615 385 655 380 690 332 710 350 722 378 735 410 740 445 765 465 780 475M770 325L790 345 820 350M335 290L332 340 365 342 370 370 420 372 465 390M520 310L510 350 465 390M370 370L345 365 325 400 325 430 310 455M162 398L185 400 200 412 240 410 280 452 310 455 340 475 330 500M465 390L465 430 445 435 440 470 425 485M465 430L505 460 575 440M615 385L575 410 575 440 580 470M425 485L435 505 450 538M330 500L425 485M330 500L295 510 285 568M118 570L160 578 285 568 310 570 340 605 405 622M310 570L318 600 300 640 275 680 272 705M305 615L312 612 308 632ZM405 622L455 608 480 575 450 538 490 530 530 518M580 470L545 485 530 518 550 570 590 600M405 622L380 655 400 685 380 705 378 735M580 470L620 470 655 500 665 535 685 550 710 555M590 600L670 605M590 600L560 610 545 635 512 640 498 628 505 648 480 660 450 665 430 700 430 712M545 635L580 665 580 710 575 725 610 745 630 718 690 712 727 712M550 770L610 745M670 605L665 625 690 635 705 625 755 643M670 605L675 568 710 555 735 530 770 518M765 465L780 495 770 518 800 525M665 105L710 90 720 105 810 140"/>
          <path transform="translate(620.7 420.700) scale(.33333)" d="M30 140L45 135 45 85 55 95 115 100M68 57L65 75 48 88M-15 0L30 0 45 35 68 50M30 140L40 180 65 230 60 250M60 250L110 250 135 272M155 210L120 180 105 125 118 100 120 80 160 85 165 110M240 45L190 38 175 75 165 110 168 135 190 165 215 170 218 185 155 210 170 225 172 240M215 170L245 155 265 180 282 197 305 232 320 235 350 235 355 280 385 297 415 290M240 45L255 75 315 78 340 55M325 100L305 110 307 150 295 185 282 197M307 145L345 175 370 180 390 145 430 168M172 240L135 272 125 300 55 365 25 350 0 350M55 365L70 410 80 435M172 240L185 330 165 380 160 440M175 258L215 258 225 298 265 300 267 350 305 365M365 285L362 310 382 330 305 365 285 380 270 420 300 462M460 370L425 405 385 405 350 410 325 445 320 460 290 465M160 440L130 438 110 448 80 435 65 430 68 470 0 480M160 440L185 500 165 520 155 555 105 598M160 440L190 455 225 445 275 470 290 465M190 430L205 420 212 432 200 445ZM275 470L285 520 310 545M175 515L225 540 290 558 310 545 345 550 375 530 430 530M305 648L310 600 303 570 310 545M455 425L435 445 440 480 462 505 430 530 460 560 465 575M0 525L40 510 95 555 100 578"/>
          <path fill="#6c4ea3" transform="translate(620.7 420.700) scale(.33333)" d="M803 650L815 652 820 685 818 712 830 730 835 780 842 805 828 840 822 862 827 885 820 905 808 945 805 952 790 940 745 922 745 905 755 895 728 890 738 870 735 858 715 857 728 830 708 815 705 798 718 790 705 775 715 762 722 740 750 722 770 705 785 703 798 712 802 685Z"/>
          <path transform="translate(620.7 420.700) scale(.33333)" d="M705 775L740 780 780 815 800 860 822 862M358 670L378 678M398 677L414 668M484 576h3M248 628l5 4"/>
          <path fill="#fff" transform="translate(620.7 420.700) scale(.33333)" d="M208 578L224 590 242 598 228 610 206 602Z"/>
          <path fill="#6c4ea3" transform="translate(260.7 140.700) scale(.33333)" d="M29 469l10-2v6zM46 484h2M52 550h3M213 638l11 2-5 3zM240 692l8-2 15 16-14-2zM275 688l5 3M285 700h3M355 765l8 2 12 18-12-11zM338 818l14 5-8 3zM440 912l34 13-2 6-32-11zM458 952l18 16 8 22-8 0-16-20z"/>
          <path fill="#fff" transform="translate(260.7 140.700) scale(.33333)" d="M285 656l15-6 8 8-10 4z"/>
        </g>
      </svg>
    </div>

    <section class="isogeo">
      <i class="edge grip-dots"></i>
      <div class="dock-title wide"><i class="grip-h"></i><span>Isogeo</span><i class="grip-h"></i><b class="sq"><svg viewBox="0 0 10 10"><path d="M3.500 3.500v-2h5v4h-2M1.500 4.500h5v4h-5z" fill="none" stroke="#000" stroke-width="1.300"/></svg></b><b class="sq"><svg viewBox="0 0 10 10"><path d="M1.500 1.500l7 7M8.500 1.500l-7 7" stroke="#000" stroke-width="1.500"/></svg></b></div>
      <div class="tabs"><span class="tab act">Recherche</span><span class="tab w2">Paramètres</span><span class="tab w3">Listes</span></div>
      <div class="pane">
        <button class="btn signal">Signaler un problème</button>
        <div class="row search"><div class="input">departement</div><div class="combo keys"><span>---- Mots clés ----</span><b><svg class="dn"><use href="#down"/></svg></b></div></div>

        <div class="ghead"><svg width="11" height="7"><path d="M0 0h11L5.500 7z" fill="#3c3c3c"/></svg><span>Filtre géographique</span><i></i></div>
        <div class="gbody geo">
          <label class="check"><b class="cb"></b>Activer le filtre</label>
          <div class="op"><span>Opération</span><div class="combo"><span>Intersectent</span><b><svg class="dn"><use href="#down"/></svg></b></div></div>
        </div>

        <div class="ghead second"><svg width="11" height="7"><path d="M0 0h11L5.500 7z" fill="#3c3c3c"/></svg><span>Recherche avancée</span><i></i></div>
        <div class="gbody adv">
          <div class="two lab"><span>Format</span><span>Propriétaire</span></div>
          <div class="two"><div class="combo"><span class="ind">-</span><b><svg class="dn"><use href="#down"/></svg></b></div><div class="combo"><span>Isogeo Demo</span><b><svg class="dn"><use href="#down"/></svg></b></div></div>
          <div class="two lab"><span>Thématiques INSPIRE</span><span>Système de coordonnées</span></div>
          <div class="two"><div class="combo"><span>Unités administratives</span><b><svg class="dn"><use href="#down"/></svg></b></div><div class="combo"><span class="ind">-</span><b><svg class="dn"><use href="#down"/></svg></b></div></div>
          <div class="lab">Ressources associées à la fiche</div>
          <div class="checks"><label class="check"><b class="cb on"><svg><use href="#cross"/></svg></b>Visualisation</label><label class="check"><b class="cb"></b>Téléchargement</label><label class="check"><b class="cb"></b>Autre action</label></div>
          <div class="saved lab2"><span>Recherches enregistrées</span><span>Enregistrer</span></div>
          <div class="saved"><div class="combo dim"><span></span><b><svg class="dn"><use href="#down"/></svg></b></div><button class="btn dim">*</button></div>
        </div>

        <div class="row actions"><button class="btn flat">2 résultats</button><button class="btn">Afficher les résultats</button></div>

        <div class="tableframe">
          <div class="thead"><b></b><b>Titre</b><b class="clip"><span>Dernière modification</span></b><b>Type de géométrie</b><b class="bold">Ajouter</b></div>
          <div class="trow"><b>1</b><span>Cantons - France<br>Métropolitaine - 2014</span><span class="d">16 / 10 / 2015</span><span>Surfacique</span><div class="combo cell"><span>Donnée fichier</span><b><svg class="dn"><use href="#down"/></svg></b></div></div>
          <div class="trow"><b class="bold">2</b><span>Départements - France<br>Métropolitaine - 2014</span><span class="d">22 / 10 / 2015</span><span>Surfacique</span><div class="combo cell open"><span>Donnée fichier</span><b><svg class="dn"><use href="#down"/></svg></b><div class="popup">Donnée fichier</div></div></div>
          <div class="trest"><b></b></div>
        </div>

        <div class="row pager"><button class="btn">&lt;</button><span>page 1 sur 1</span><button class="btn">&gt;</button><button class="btn reset">Réinitialiser</button></div>
      </div>
    </section>
  </div>

  <footer class="status">
    <svg class="mouse" width="20" height="20" viewBox="0 0 20 20"><rect x=".5" y=".5" width="19" height="19" rx="2" fill="#e6e6e6" stroke="#8b8b8b"/><rect x="6" y="5" width="9" height="12" rx="4.500" fill="#fff" stroke="#222" stroke-width="1.500" transform="rotate(-25 10 10)"/><path d="M5 10l7-4M8 5l2 4M4 4l3 4M11 3l2 3M8 9l4 6" stroke="#222" stroke-width="1.500"/></svg>
    <span class="c0">Coordonnée :</span><div class="input coord">1200163,6329270</div>
    <span class="c1">Échelle</span><div class="combo scale"><span>1:6 842 827</span><b><svg class="dn"><use href="#down"/></svg></b></div>
    <span class="c2">Rotation :</span><div class="spin"><span>0,0</span><b><i class="up"></i><i class="dw"></i></b></div>
    <label class="check rendu"><b class="cb on"><svg><use href="#cross"/></svg></b>Rendu</label>
    <svg class="globe" width="16" height="16" viewBox="0 0 16 16"><circle cx="8" cy="8" r="6.500" fill="#b5b5b5" stroke="#8a8a8a" stroke-width="1.500"/><circle cx="8" cy="8" r="4" fill="#ccc" stroke="#eee"/><path d="M8 0v4M8 12v4M0 8h4M12 8h4" stroke="#777" stroke-width="3"/></svg>
    <span>EPSG:2154</span>
    <svg class="bubble" width="17" height="16" viewBox="0 0 17 16"><ellipse cx="8.500" cy="7" rx="8" ry="6.500" fill="#555"/><path d="M10 12l5 4v-6z" fill="#555"/></svg>
    <svg class="sizer" width="12" height="12"><path d="M0 12L12 0M4 12l8-8M8 12l4-4" stroke="#999"/><path d="M1.500 12L12 1.500M5.500 12L12 5.500" stroke="#fff"/></svg>
  </footer>
  <svg class="callout" width="400" height="34" viewBox="906 676 400 34"><path d="M914 692.500L1104 681.500M1105 681V686.500H1299V699.500H1105V705.500L914 693" fill="none" stroke="#ff7f27" stroke-width="5.500" stroke-linejoin="round" stroke-linecap="round"/><path d="M912 692.500L960 688V697.500z" fill="#ff7f27"/></svg>
</div>
</body>
</html>
```
FILE: styles.css
```css
* { box-sizing: border-box; }
body { margin: 0; background: #f0f0f0; color: #000; font: 11px/14px "Noto Sans", "Open Sans", sans-serif; letter-spacing: -.3px; overflow: hidden; }
i { font-style: normal; display: block; flex: none; }
b { font-weight: normal; flex: none; }
svg { display: block; flex: none; }
.defs { position: absolute; }
.bold { font-weight: bold; }
.window { position: relative; width: 1434px; height: 791px; display: flex; flex-direction: column; white-space: nowrap; }

.titlebar { height: 29px; background: #fff; display: flex; align-items: center; padding: 0 12px 4px 7px; font-size: 12px; font-family: "Open Sans", sans-serif; }
.title { margin-left: 5px; flex: 1; }
.menubar { height: 21px; display: flex; align-items: center; padding-left: 6px; }
.m1 { width: 44px; } .m2 { width: 43px; } .m3 { width: 33px; } .m4 { width: 51px; } .m5 { width: 73px; }
.m6 { width: 62px; } .m7 { width: 51px; } .m8 { width: 47px; } .m9 { width: 56px; }

.toolbar { height: 39px; border-top: 1px solid #b9b9b9; box-shadow: inset 0 1px #fff; display: flex; align-items: center; }
.ic { width: 24px; height: 24px; margin-right: 11px; overflow: visible; }
.grip-v { width: 5px; height: 30px; margin: 0 6px 0 3px; background: radial-gradient(circle at 1px 1px, #c6c6c6 1px, transparent 1.300px) 0 0/5px 6px repeat-y, radial-gradient(circle at 3.500px 4px, #c6c6c6 1px, transparent 1.300px) 0 0/5px 6px repeat-y; }
.g1 { margin: 0 2px 0 2px; }
.pressed { width: 34px; height: 33px; flex: none; border: 1px solid #8c8c8c; border-radius: 3px; background: linear-gradient(#cfcfcf, #dedede); display: flex; align-items: center; padding-left: 4px; margin-right: 6px; }
.g2 { margin: 0 5px 0 3px; }
.dn { width: 9px; height: 5px; }
.grey { color: #999; }
.a1 { margin: 0 8px 0 -4px; }
.a2 { margin: 0 10px 0 -5px; }
.eps { margin-right: 9px; }
.a3 { margin: 0 8px 0 -5px; }
.a4 { margin-left: -5px; }
.g3 { margin: 0 4px 0 5px; }
.g3 ~ .ic { margin-top: 3px; }
.g4 { margin: 0 6px 0 20px; }
.g4 ~ .ic { margin-top: 0; }
.a5 { margin: 0 10px 0 -5px; }
.g5 { margin: 0 7px 0 0; }
.ratio { font: bold 8px "DejaVu Sans", sans-serif; fill: #999; }
.tee { font: bold 12px "Liberation Serif", serif; fill: #444; }
.abc { font: bold 8px "DejaVu Sans", sans-serif; fill: #222; }
.abc.g { fill: #8d8d8d; }

.main { height: 634px; display: flex; border-top: 1px solid #b9b9b9; }
.sidebar { width: 49px; flex: none; border-right: 1px solid #b9b9b9; padding: 7px 0 0 11px; display: flex; flex-direction: column; }
.sidebar .ic { margin: 0 0 10.100px; }
.grip-h { height: 5px; background: radial-gradient(circle at 1px 3.500px, #cdcdcd 1px, transparent 1.300px) 0 0/6px 5px repeat-x, radial-gradient(circle at 4px 1px, #cdcdcd 1px, transparent 1.300px) 0 0/6px 5px repeat-x; }
.sidebar .grip-h { width: 41px; margin: 0 0 3px -9px; }
.sidebar .low { margin-top: 49px; margin-bottom: 3px; }
.pair { display: flex; margin-left: -6px; align-items: center; height: 34px; }
.pair .dn { margin-left: 6px; margin-top: -10px; }
.docks { width: 197px; flex: none; display: flex; flex-direction: column; padding-left: 1px; }
.dock-title { height: 14px; flex: none; display: flex; align-items: center; margin: 2px 1px 0 2px; font-size: 9.500px; }
.dock-title .grip-h { width: 54px; }
.dock-title span { width: 52px; text-align: center; }
.sq { width: 14px; height: 14px; border: 1px solid #777; border-radius: 3px; background: #f7f7f7; display: grid; place-items: center; margin-left: 1px; }
.sq svg { width: 10px; height: 10px; }
.dock-title .grip-h + .sq { margin-left: auto; }
.dock-tools { height: 31px; display: flex; align-items: center; gap: 16px; padding-left: 8px; }
.eye { margin: 0 -1px 0 1px; }
.i16 { width: 16px; height: 16px; overflow: visible; }
.frame { border: 1px solid #aaa; border-radius: 2px; background: #fff; width: 195px; flex: none; }
.layers { height: 303px; margin-top: 4px; }
.layer { background: #efefef; height: 17px; display: flex; align-items: center; padding-left: 10px; }
.elbow { width: 10px; height: 8px; border: dotted #999; border-width: 0 0 1px 1px; margin: -7px 3px 0 0; }
.cb { width: 13px; height: 13px; border: 1px solid #b5b5b5; background: #fafafa; display: grid; place-items: center; }
.cb svg { width: 9px; height: 9px; }
.swatch { width: 16px; height: 16px; background: #5d66bf; border: 1px solid #3b4286; margin: 0 6px 0 6px; }
.layer strong { text-decoration: underline; letter-spacing: .05px; }
.split { height: 8px; flex: none; display: grid; place-items: center; }
.grip-dots { background: radial-gradient(circle at 1px 1px, #c4c4c4 1px, transparent 1.200px) 0 0/5px 5px; }
.split .grip-dots { width: 63px; height: 3px; }
.t2 { margin-top: 1px; }
.dock-tools.b { padding-left: 4px; }
.browser { height: 219px; display: grid; grid-template: 201px 16px / 176px 16px; margin-top: 4px; }
.tree { list-style: none; margin: 0; padding: 1px 0 0; overflow: hidden; background: linear-gradient(90deg, transparent 10px, #ccc 10px, #ccc 11px, transparent 11px) 0 8px no-repeat; }
.tree li { height: 16px; display: flex; align-items: center; padding-left: 25px; background: repeating-linear-gradient(90deg, #aaa 0 1px, transparent 1px 2px) 35px 6px/6px 1px no-repeat; }
.tree li.root { padding-left: 5px; background-position: 15px 6px; }
.fo { width: 13px; height: 16px; margin: 0 7px 0 11px; }
.pm { width: 9px; height: 9px; border: 1px solid #999; background: linear-gradient(#555, #555) 1px 3px/5px 1px no-repeat, linear-gradient(#555, #555) 3px 1px/1px 5px no-repeat, #fff; margin-top: -2px; }
.minus { background: linear-gradient(#555, #555) 1px 3px/5px 1px no-repeat, #fff; }
.vscroll, .hscroll { display: flex; background: #e9e9e9; }
.vscroll { flex-direction: column; }
.vscroll span, .hscroll span { flex: 1; }
.sb, .thumb { border: 1px solid #8f8f8f; border-radius: 2px; background: linear-gradient(90deg, #fff, #e2e2e2); width: 16px; height: 16px; display: grid; place-items: center; }
.vscroll .thumb { height: 26px; }
.hscroll .thumb { width: 89px; background: linear-gradient(#fff, #dedede); }
.hscroll .grip-dots { width: 18px; height: 10px; }
.corner { background: #f0f0f0; }
.up, .dw, .lf, .rt { width: 0; height: 0; border: 4px solid transparent; }
.up { border-width: 0 4px 4px; border-bottom-color: #000; }
.dw { border-width: 4px 4px 0; border-top-color: #000; }
.lf { border-width: 4px 4px 4px 0; border-right-color: #000; }
.rt { border-width: 4px 0 4px 4px; border-left-color: #000; }
.vsplit { width: 5px; flex: none; display: grid; place-items: center; }
.vsplit .grip-dots { width: 3px; height: 208px; margin-top: -15px; }
.map { width: 667px; height: 632px; border: 1px solid #b5b5b5; background: #fff; flex: none; }
.france { width: 665px; height: 630px; }

.isogeo { flex: 1; min-width: 0; position: relative; display: flex; flex-direction: column; padding: 0 9px 0 15px; }
.edge { position: absolute; left: 1px; top: 208px; width: 3px; height: 208px; }
.wide { margin: 2px -8px 0 -9px; }
.wide .grip-h { width: 215px; }
.wide .grip-h + span { width: 46px; }
.tabs { display: flex; align-items: flex-end; height: 33px; margin-bottom: -1px; z-index: 1; }
.tab { border: 1px solid #b0b0b0; border-left: 0; height: 17px; background: linear-gradient(#fdfdfd, #dcdcdc); text-align: center; padding-top: 1px; }
.tab.act { width: 75px; height: 20px; background: #f0f0f0; border-left: 1px solid #b0b0b0; border-bottom: 0; border-radius: 2px 2px 0 0; padding-top: 3px; }
.w2 { width: 80px; } .w3 { width: 49px; }
.pane { height: 575px; border: 1px solid #b0b0b0; border-radius: 2px; padding: 12px 10px 0; display: flex; flex-direction: column; }
.btn { font: inherit; letter-spacing: inherit; color: #000; height: 23px; border: 1px solid #adadad; border-radius: 3px; background: linear-gradient(#fefefe, #dcdcdc); padding: 0; flex: none; }
.signal { width: 154px; letter-spacing: -.5px; }
.row { display: flex; align-items: center; }
.search { margin-top: 12px; gap: 20px; }
.input { height: 20px; border: 1px solid #aaa; border-radius: 2px; background: #fff; padding: 3px 4px; width: 224px; }
.combo { height: 20px; border: 1px solid #aaa; border-radius: 2px; background: linear-gradient(#fdfdfd, #dbdbdb); display: flex; flex: none; position: relative; }
.combo > span { flex: 1; padding: 2px 3px; }
.combo > .ind { padding-left: 7px; }
.combo > b { width: 16px; border-left: 1px solid #b5b5b5; display: grid; place-items: center; }
.keys { width: 211px; letter-spacing: -.1px; }
.keys > span { padding-left: 4px; }
.ghead { display: flex; height: 15px; margin-top: 11px; align-items: center; padding-left: 3px; }
.ghead svg { margin-top: 3px; }
.ghead span { margin: 2px 8px 0 6px; }
.ghead i { flex: 1; height: 9px; align-self: flex-end; border: solid #b5b5b5; border-width: 1px 1px 0 0; border-radius: 0 3px 0 0; }
.gbody { border: solid #b5b5b5; border-width: 0 1px 1px; border-radius: 0 0 3px 3px; }
.geo { height: 55px; display: flex; padding-left: 8px; }
.check { display: flex; align-items: center; gap: 5px; }
.geo .check { width: 230px; height: 14px; margin-top: 29px; }
.op { padding-top: 7px; }
.op .combo { width: 222px; margin-top: 5px; }
.adv { height: 198px; padding: 9px 0 0 9px; }
.lab { height: 14px; }
.two { display: grid; grid-template-columns: 220px 221px; column-gap: 7px; }
.two + .two { margin-top: 5px; }
.two + .lab { margin-top: 6px; }
.checks { display: grid; grid-template-columns: 114px 228px auto; margin-top: 7px; padding-left: 1px; }
.saved { display: grid; grid-template-columns: 220px 107px; justify-content: space-between; padding-right: 10px; }
.lab2 { margin: 8px 0 8px; }
.saved .dim { color: #777; border-color: #999; }
.saved .btn.dim { margin-top: -1px; color: #58708c; }
.actions { margin: 11px 0 11px 79px; gap: 10px; }
.flat { width: 145px; background: #f0f0f0; }
.actions .btn:last-child { width: 156px; letter-spacing: -.25px; }
.tableframe { height: 113px; border: 1px solid #aaa; border-radius: 2px; padding: 1px; }
.thead, .trow { display: grid; grid-template-columns: 14px 138px 100px 101px 99px; }
.thead b { height: 21px; border: solid #8f8f8f; border-width: 1px 1px 1px 0; text-align: center; padding-top: 3px; background: linear-gradient(#fff, #e4e4e4); }
.thead .bold { font-weight: bold; }
.clip { overflow: hidden; display: flex; justify-content: center; letter-spacing: -.5px; }
.clip span { width: 93px; overflow: hidden; display: flex; justify-content: center; }
.trow { height: 30px; width: 467px; background: #fff; }
.trow > b { border: solid #8f8f8f; border-width: 0 1px 1px 0; background: linear-gradient(90deg, #fff, #e0e0e0); text-align: center; padding-top: 8px; }
.trow > b.bold { font-weight: bold; }
.trow > span { border: solid #9a9a9a; border-width: 0 1px 1px 0; padding: 0 0 1px 3px; line-height: 13px; display: flex; align-items: center; }
.trow .d { letter-spacing: -.1px; }
.cell { height: 29px; border-radius: 2px; }
.cell > span { padding: 7px 3px; }
.open { height: 30px; border-color: #3c7fcf; background: linear-gradient(#cdcdcd, #e2e2e2); }
.popup { position: absolute; left: 0; top: 28px; width: 97px; height: 16px; border: 1px solid #c4d4e4; background: #3399ff; color: #fff; padding-left: 2px; box-shadow: 2px 2px 2px rgba(0,0,0,.55); z-index: 5; }
.trest { height: 28px; background: #fff; }
.trest b { display: block; width: 14px; height: 28px; background: #f0f0f0; }
.pager { margin: 10px 0 0 79px; }
.pager .btn { width: 75px; }
.pager span { width: 80px; text-align: center; }
.pager .reset { margin-left: 48px; }

.status { height: 28px; display: flex; align-items: center; padding-left: 506px; position: relative; }
.c0 { margin-left: 8px; width: 76px; }
.coord { width: 300px; text-align: center; padding-top: 2px; }
.c1 { margin-left: 8px; width: 46px; }
.scale { width: 87px; background: #fff; letter-spacing: -.1px; }
.scale b { background: linear-gradient(#fdfdfd, #dcdcdc); }
.c2 { margin-left: 8px; width: 58px; }
.spin { width: 97px; height: 25px; border: 1px solid #aaa; border-radius: 2px; background: #fff; display: flex; }
.spin span { flex: 1; padding: 5px 4px; }
.spin b { width: 15px; border-left: 1px solid #b5b5b5; display: grid; place-items: center; background: #f4f4f4; }
.rendu { margin: 0 18px 0 7px; gap: 4px; }
.globe { margin-right: 3px; }
.bubble { margin-left: 22px; }
.sizer { position: absolute; right: 0; bottom: 0; }
.callout { position: absolute; left: 906px; top: 676px; z-index: 2; }
```
